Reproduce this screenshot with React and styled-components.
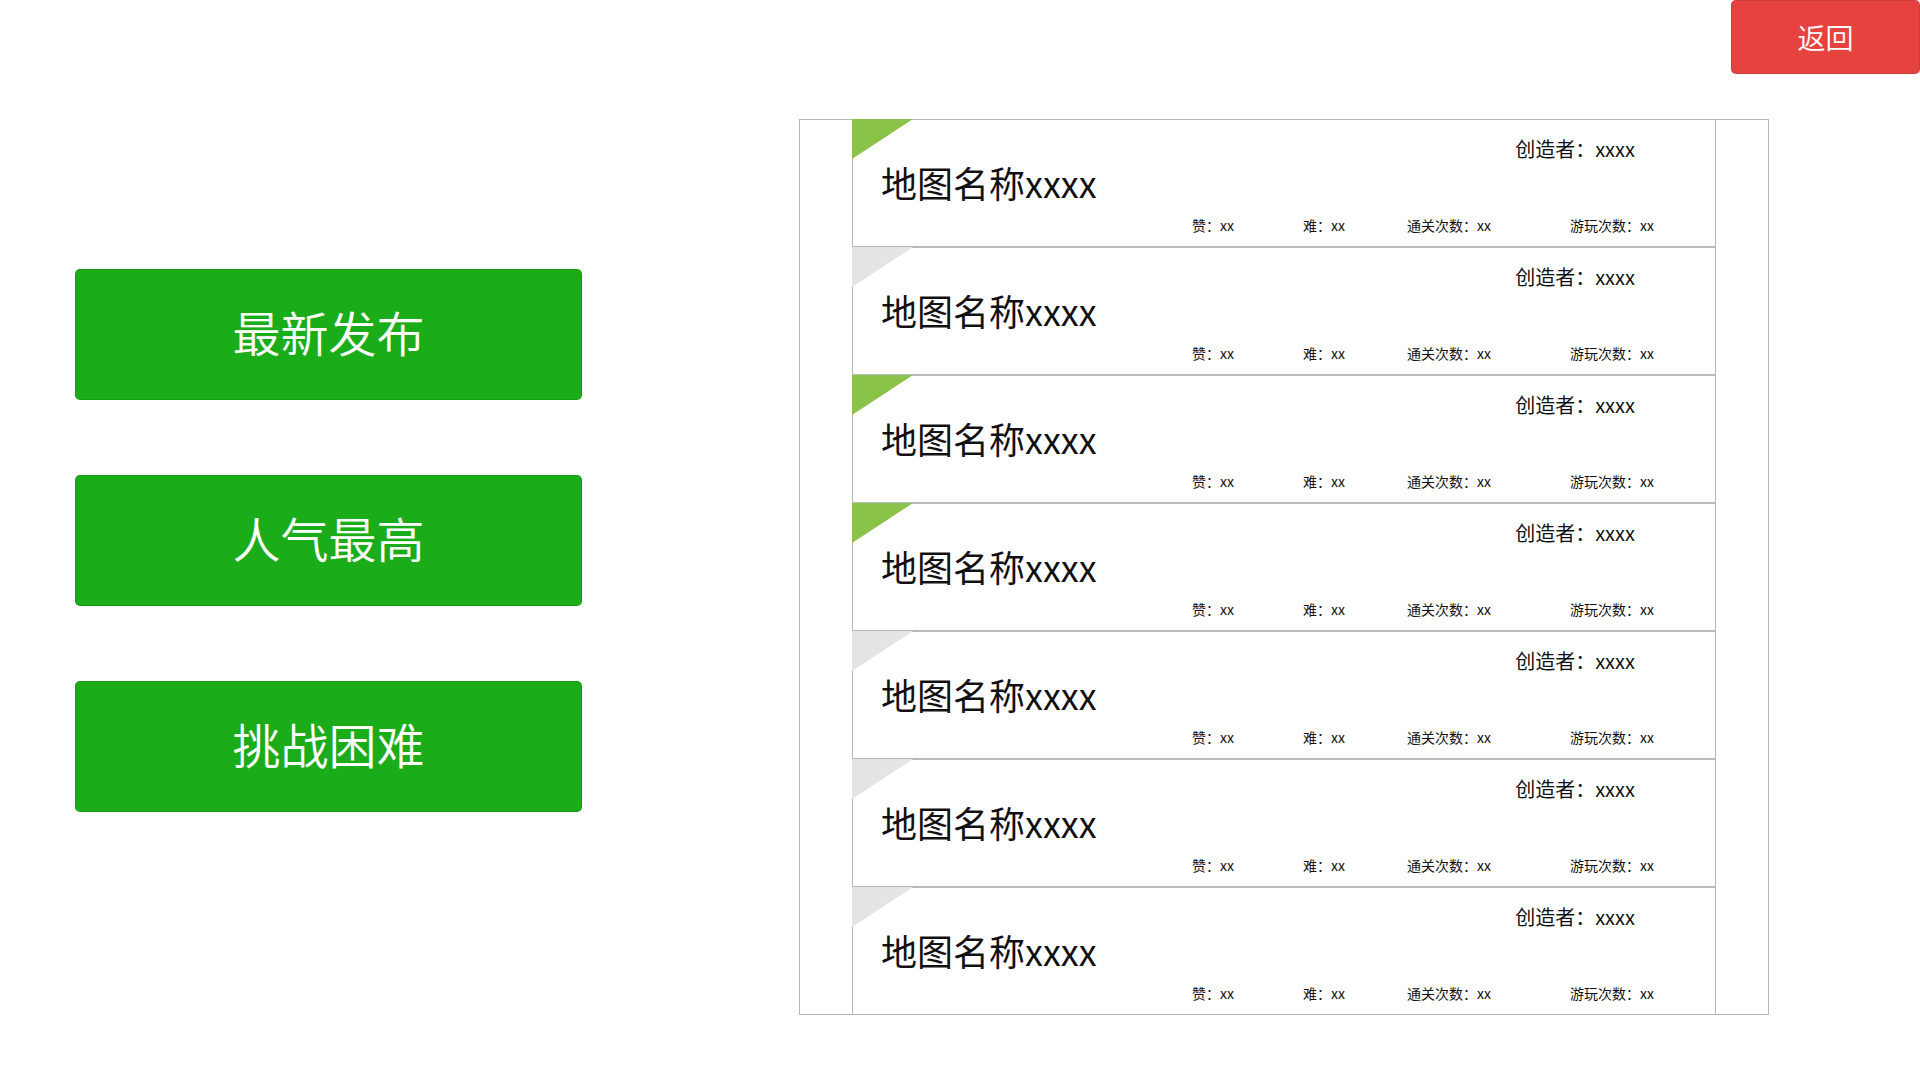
import React from "react";
import styled, { createGlobalStyle } from "styled-components";

const GlobalStyle = createGlobalStyle`
  *, *::before, *::after { box-sizing: border-box; }
  body {
    margin: 0;
    background: #fff;
    color: #111;
    font-family: "Noto Sans CJK SC", sans-serif;
  }
`;

const Page = styled.div`
  min-height: 100vh;
  display: flex;
  flex-direction: column;
`;

const Header = styled.header`
  display: flex;
  justify-content: flex-end;
`;

const Button = styled.button`
  border: 1px solid rgba(0, 0, 0, 0.1);
  border-radius: 5px;
  color: #fff;
  font-family: inherit;
  font-weight: 350;
  cursor: pointer;
`;

const BackButton = styled(Button)`
  width: 189px;
  height: 74px;
  padding: 0;
  background: #e64340;
  font-size: 28px;
`;

const SortButton = styled(Button)`
  height: 131px;
  padding: 0 0 8px;
  background: #1aad19;
  font-size: 48px;
`;

const Main = styled.main`
  display: grid;
  grid-template-columns: 507fr 970fr;
  column-gap: 217px;
  align-items: start;
  padding: 45px 151px 45px 75px;
`;

const SortMenu = styled.nav`
  display: flex;
  flex-direction: column;
  gap: 75px;
  padding-top: 150px;
`;

const MapList = styled.ul`
  list-style: none;
  margin: 0;
  padding: 0 53px;
  box-shadow: inset 0 0 0 1px #b8b8b8;
`;

const MapRow = styled.li`
  position: relative;
  display: flex;
  justify-content: space-between;
  min-height: 128px;
  padding: 17px 61px 11px 28px;
  border: 1px solid #b8b8b8;
`;

const Corner = styled.span`
  position: absolute;
  top: -1px;
  left: -1px;
  width: 61px;
  height: 40px;
  background: ${(p) => (p.$cleared ? "#8bc34a" : "#e4e4e4")};
  clip-path: polygon(0 0, 100% 0, 0 100%);
`;

const MapName = styled.h2`
  margin: 0;
  padding-top: 21px;
  font-size: 36px;
  line-height: 48px;
  font-weight: 400;
`;

const Info = styled.div`
  display: flex;
  flex-direction: column;
  justify-content: space-between;
`;

const Creator = styled.span`
  align-self: flex-end;
  padding-right: 19px;
  font-size: 20px;
  line-height: 24px;
`;

const Stats = styled.div`
  display: grid;
  grid-template-columns: 111px 104px 163px 84px;
  font-size: 14px;
  line-height: 20px;
  white-space: nowrap;
`;

const SORTS = ["最新发布", "人气最高", "挑战困难"];
const MAPS = [true, false, true, true, false, false, false].map((cleared, id) => ({
  id,
  cleared,
  name: "地图名称xxxx",
  creator: "xxxx",
  stats: [
    ["赞", "xx"],
    ["难", "xx"],
    ["通关次数", "xx"],
    ["游玩次数", "xx"],
  ],
}));

export default function App() {
  return (
    <Page>
      <GlobalStyle />
      <Header>
        <BackButton type="button">返回</BackButton>
      </Header>
      <Main>
        <SortMenu>
          {SORTS.map((label) => (
            <SortButton key={label} type="button">{label}</SortButton>
          ))}
        </SortMenu>
        <MapList>
          {MAPS.map((map) => (
            <MapRow key={map.id}>
              <Corner $cleared={map.cleared} />
              <MapName>{map.name}</MapName>
              <Info>
                <Creator>{`创造者：${map.creator}`}</Creator>
                <Stats>
                  {map.stats.map(([label, value]) => (
                    <span key={label}>{`${label}：${value}`}</span>
                  ))}
                </Stats>
              </Info>
            </MapRow>
          ))}
        </MapList>
      </Main>
    </Page>
  );
}
